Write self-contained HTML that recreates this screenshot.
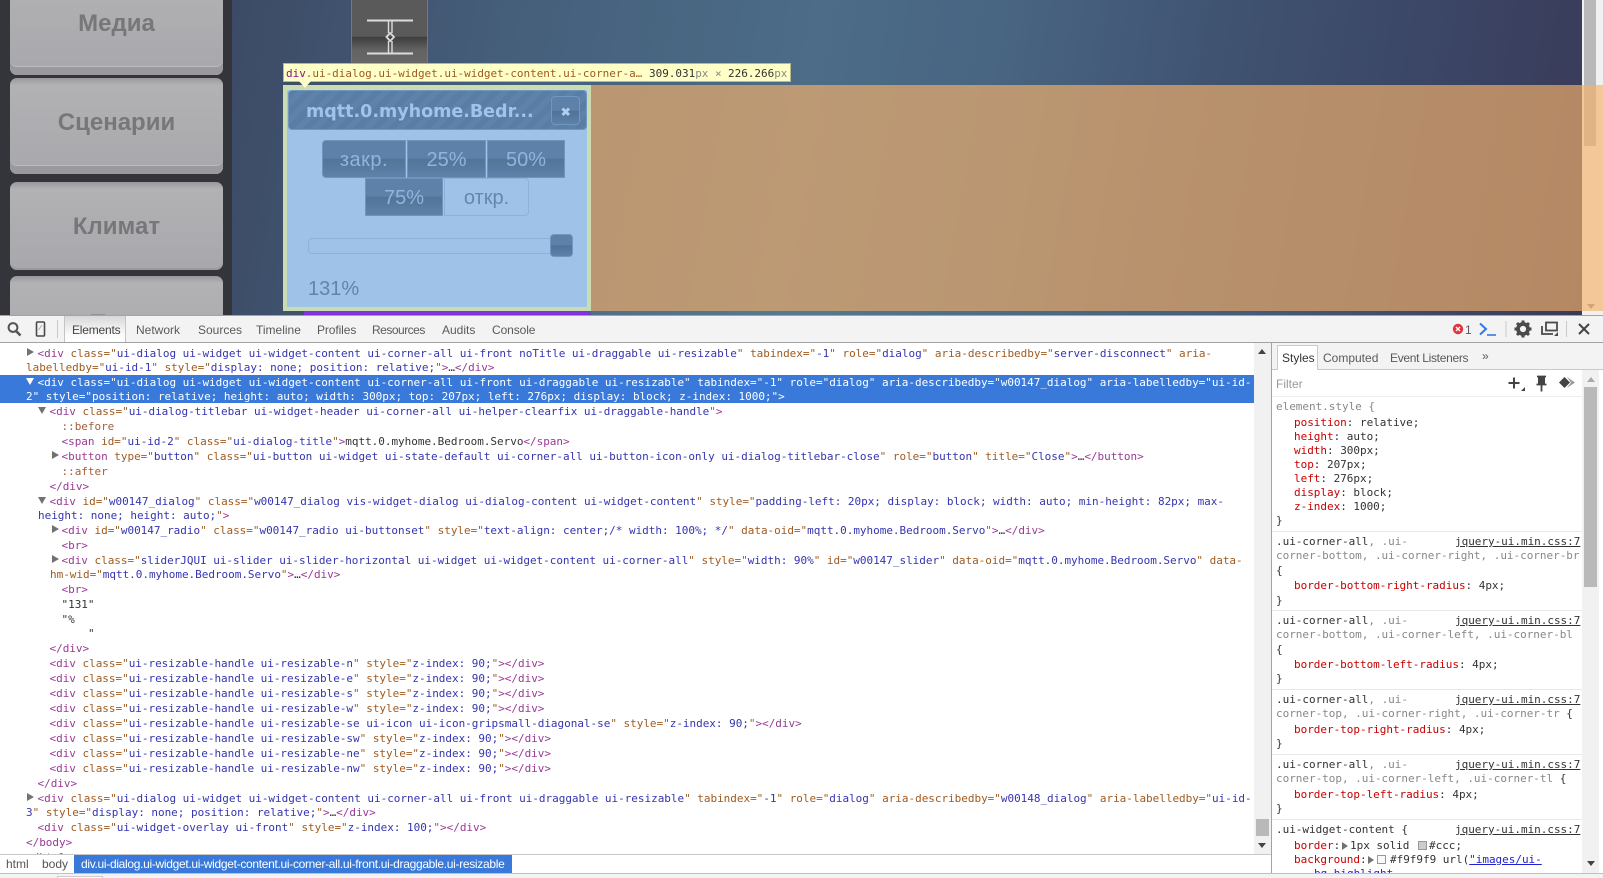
<!DOCTYPE html>
<html><head><meta charset="utf-8"><title>DevTools</title>
<style>
html,body{margin:0;padding:0;width:1603px;height:878px;overflow:hidden;background:#f3f3f3}
body{position:relative;font-family:"Liberation Sans",Arial,sans-serif}
.a{position:absolute}
#page{position:absolute;left:0;top:0;width:1603px;height:315px;overflow:hidden;background:#34353b}
#bg{position:absolute;left:232px;top:0;width:1350px;height:315px;background:linear-gradient(100deg,#3c4a65 0,#46607c 22%,#4c6c87 42%,#486582 55%,#3f5270 72%,#3b4464 88%,#393a58 100%)}
.mb{position:absolute;left:10px;width:213px;border-radius:7px;background:linear-gradient(180deg,#99999c 0,#b2b2b5 7px,#a8a8ac 100%);box-shadow:inset 0 -8px 0 #9a9a9e,inset 0 -9px 0 #bcbcbf;text-align:center;font-weight:bold;font-size:24px;color:#77777a}
.bt{position:absolute;height:38px;box-sizing:border-box;background:linear-gradient(180deg,#5d81a8 0,#5d81a8 48%,#517498 50%,#5e82a9 100%);color:#90b4de;font-size:20px;text-align:center;line-height:39px;border:1px solid #7095bd}
#el{position:absolute;left:0;top:343px;width:1254px;height:511px;overflow:hidden;background:#fff}
.m,.m *{font-family:"DejaVu Sans Mono","Liberation Mono",monospace;font-size:11px;line-height:14px;white-space:pre;font-weight:normal;font-style:normal;text-decoration:none;letter-spacing:-.025px}
.l{position:absolute;color:#333;margin-top:1px}
.t{color:#9a3a94}.n{color:#a05a20}.v{color:#3535b0}.ps{color:#a0603c}
.sel .l,.sel .t,.sel .n,.sel .v{color:#fff}
.r{position:absolute;width:0;height:0;border-left:7px solid #727272;border-top:4px solid transparent;border-bottom:4px solid transparent}
.d{position:absolute;width:0;height:0;border-top:7px solid #727272;border-left:4px solid transparent;border-right:4px solid transparent}
.tb{position:absolute;top:322px;font-size:12px;color:#5a5a5a;line-height:16px}
#st{position:absolute;left:1272px;top:397px;width:310px;height:476px;overflow:hidden;background:#fff}
.s{position:absolute;left:4px;color:#888;margin-top:1px}
.c{color:#333}
.q{position:absolute;left:22px;color:#333;margin-top:1px}
.q b{color:#c80000}
.lk{position:absolute;left:183px;color:#333;text-decoration:underline!important;margin-top:1px}
.dv{position:absolute;left:0;width:310px;height:1px;background:#e8e8e8}
</style></head><body>

<div id="page">
 <div id="bg"></div>
 <div class="mb" style="top:-30px;height:105px;line-height:108px">Медиа</div>
 <div class="mb" style="top:78px;height:96px;line-height:90px">Сценарии</div>
 <div class="mb" style="top:182px;height:88px;line-height:90px;box-shadow:inset 0 -2px 0 #9a9a9e">Климат</div>
 <div class="mb" style="top:276px;height:90px;line-height:96px">Тест</div>
 <div class="a" style="left:280px;top:-11px;color:#fff;font:12px 'Liberation Serif',serif;line-height:14px">Star</div>

 <div class="a" style="left:351px;top:-4px;width:77px;height:70px;box-sizing:border-box;border:1px solid #777;border-radius:4px;background:linear-gradient(180deg,#5a5a5a 0,#5a5a5a 58%,#3e3e3e 59%,#636363 78%,#686868 100%)"></div>
 <svg class="a" style="left:351px;top:0" width="78" height="63" fill="none" stroke="#dcdcdc" stroke-width="2"><path d="M16 20.5H62M16 53.5H62"/><path d="M37.5 21V33M41 21V33M37.5 41V53M41 41V53" stroke-width="1.4"/><path d="M39.2 33L43 37L39.2 41L35.5 37Z" stroke-width="1.8"/></svg>

 <!-- scrollbar -->
 <div class="a" style="left:1582px;top:0;width:21px;height:315px;background:#f1f1f1"></div>
 <div class="a" style="left:1584px;top:0;width:12px;height:146px;background:#b9b9b9"></div>
 <div class="a" style="left:1587px;top:304px;border-top:5px solid #8a8a8a;border-left:4px solid transparent;border-right:4px solid transparent"></div>
 <!-- margin overlay -->
 <div class="a" style="left:591px;top:85px;width:1012px;height:226px;background:rgba(246,178,107,.66);z-index:3"></div>

 <!-- dialog -->
 <div class="a" style="left:283px;top:85px;width:308px;height:226px;background:#c9dcb2"></div>
 <div class="a" style="left:287px;top:90px;width:300px;height:217px;background:#9fc2e8"></div>
 <div class="a" style="left:288px;top:90px;width:299px;height:40px;box-sizing:border-box;border:1px solid #7196c0;border-radius:4px;background:repeating-linear-gradient(135deg,#5a7da5 0,#5a7da5 6px,#5f82aa 6px,#5f82aa 12px)"></div>
 <div class="a" style="left:306px;top:99px;font:bold 17.5px 'DejaVu Sans',sans-serif;line-height:26px;color:#a0c3e9;white-space:nowrap">mqtt.0.myhome.Bedr...</div>
 <div class="a" style="left:551px;top:96px;width:29px;height:29px;box-sizing:border-box;border:1px solid #7196c0;border-radius:4px;background:linear-gradient(180deg,#5d81a8 0,#5d81a8 50%,#4f7299 52%,#5d81a8 100%)"></div>
 <svg class="a" style="left:560px;top:106px" width="12" height="12" stroke="#b3cdee" stroke-width="3"><path d="M2.5 2.5L9 9M9 2.5L2.5 9"/></svg>

 <div class="bt" style="left:322px;top:140px;width:84px;border-radius:4px 0 0 4px;letter-spacing:.5px">закр.</div>
 <div class="bt" style="left:407px;top:140px;width:79px">25%</div>
 <div class="bt" style="left:487px;top:140px;width:78px">50%</div>
 <div class="bt" style="left:365px;top:178px;width:78px">75%</div>
 <div class="bt" style="left:444px;top:178px;width:85px;background:#9fc2e8;color:#6388b0;border-color:#8db1da;border-radius:0 4px 4px 0">откр.</div>

 <div class="a" style="left:308px;top:238px;width:255px;height:16px;box-sizing:border-box;border:1px solid #8db1da;border-radius:4px"></div>
 <div class="a" style="left:550px;top:234px;width:23px;height:23px;box-sizing:border-box;border:1px solid #7196c0;border-radius:4px;background:linear-gradient(180deg,#5d81a8 0,#5d81a8 48%,#4f7299 50%,#5d81a8 100%)"></div>
 <div class="a" style="left:308px;top:277px;font-size:20px;line-height:24px;color:#5f85ad">131%</div>

 <div class="a" style="left:304px;top:311px;width:286px;height:4px;background:#7f33e0"></div>
 <div class="a" style="left:591px;top:311px;width:991px;height:4px;background:linear-gradient(90deg,#4f6f8c,#537a95 20%,#44587a 70%,#393a58)"></div>

 <!-- tooltip -->
 <div class="a m" style="left:283px;top:63px;width:508px;height:19px;box-sizing:border-box;border:1px solid #b8b890;background:#ffffc8;z-index:5"></div>
 <div class="a m" style="left:286px;top:67px;color:#a05a20;z-index:6"><span style="color:#881280">div</span>.ui-dialog.ui-widget.ui-widget-content.ui-corner-a…</div>
 <div class="a m" style="left:649px;top:67px;color:#333;z-index:6">309.031<span style="color:#888">px × </span></div>
 <div class="a m" style="left:728px;top:67px;color:#333;z-index:6">226.266<span style="color:#888">px</span></div>
 <div class="a" style="left:299px;top:81px;border-top:7px solid #ffffc8;border-left:6px solid transparent;border-right:6px solid transparent;z-index:6"></div>
</div>

<!-- toolbar -->
<div class="a" style="left:0;top:315px;width:1603px;height:28px;box-sizing:border-box;background:#f3f3f3;border-top:1px solid #a3a3a3;border-bottom:1px solid #a3a3a3"></div>
<svg class="a" style="left:6px;top:321px" width="16" height="16" fill="none" stroke="#555" stroke-width="2"><circle cx="7" cy="6.5" r="4.4"/><path d="M10 10L14.5 14.5" stroke-width="2.6"/></svg>
<svg class="a" style="left:35px;top:321px" width="12" height="17" fill="none"><rect x="1.5" y="1" width="8" height="14" rx="1" stroke="#4a4a4a" stroke-width="1.6"/><path d="M3.5 9L7 4" stroke="#aaa"/></svg>
<div class="a" style="left:57px;top:320px;width:1px;height:18px;background:#c8c8c8"></div>
<div class="a" style="left:64px;top:316px;width:62px;height:26px;box-sizing:border-box;border-left:1px solid #c4c4c4;border-right:1px solid #c4c4c4;background:linear-gradient(180deg,#d8d8d8,#fafafa 70%,#fff)"></div>
<div class="tb" style="left:72px;color:#444;letter-spacing:-.2px">Elements</div>
<div class="tb" style="left:136px">Network</div>
<div class="tb" style="left:198px">Sources</div>
<div class="tb" style="left:256px">Timeline</div>
<div class="tb" style="left:317px;letter-spacing:-.1px">Profiles</div>
<div class="tb" style="left:372px;letter-spacing:-.5px">Resources</div>
<div class="tb" style="left:442px">Audits</div>
<div class="tb" style="left:492px;letter-spacing:-.1px">Console</div>

<svg class="a" style="left:1451px;top:320px" width="120" height="18" fill="none">
 <circle cx="7" cy="9" r="5.2" fill="#e0343f"/><path d="M5 7L9 11M9 7L5 11" stroke="#fff" stroke-width="1.4"/>
 <path d="M29 3.5L35 9L29 14.5" stroke="#2f7be6" stroke-width="2"/><path d="M36 15H45" stroke="#2f7be6" stroke-width="1.6"/>
 <path d="M55 1V17" stroke="#c8c8c8"/>
 <circle cx="72" cy="9" r="5" stroke="#4a4a4a" stroke-width="3.8"/><path d="M72 0.5V4M72 14V17.5M63.5 9H67M77 9H80.5M66 3L68.5 5.5M75.5 12.5L78 15M66 15L68.5 12.5M75.5 5.5L78 3" stroke="#4a4a4a" stroke-width="3"/>
 <rect x="95" y="2.5" width="11" height="8" stroke="#4a4a4a" stroke-width="1.8"/><path d="M91 6V14H102" stroke="#4a4a4a" stroke-width="1.8"/><path d="M103 16H107V12Z" fill="#4a4a4a"/>
 <path d="M115.5 1V17" stroke="#c8c8c8"/>
</svg>
<div class="a" style="left:1465px;top:322px;font-size:12px;line-height:16px;color:#5a5a5a">1</div>
<svg class="a" style="left:1577px;top:322px" width="14" height="14" stroke="#444" stroke-width="2"><path d="M2 2L12 12M12 2L2 12"/></svg>

<!-- elements pane -->
<div id="el" class="m">
<div class="l" style="left:26px;top:-19px"><span class="n">labelledby</span><span class="n">="</span><span class="v">ui-id-0</span>" <span class="n">style</span><span class="n">="</span><span class="v">display: none; position: relative; top: 0px; left: 0px;</span>"<span class="t">&gt;…&lt;/div&gt;</span></div>
<div class="a" style="left:0;top:32px;width:1254px;height:28px;background:#3879d9"></div>
<div class="sel">
<div class="l" style="left:37.5px;top:32px">&lt;div class="ui-dialog ui-widget ui-widget-content ui-corner-all ui-front ui-draggable ui-resizable" tabindex="-1" role="dialog" aria-describedby="w00147_dialog" aria-labelledby="ui-id-</div>
<div class="l" style="left:26px;top:46px">2" style="position: relative; height: auto; width: 300px; top: 207px; left: 276px; display: block; z-index: 1000;"&gt;</div>
</div>
<div class="l" style="left:37.5px;top:3px"><span class="t">&lt;div</span> <span class="n">class="</span><span class="v">ui-dialog ui-widget ui-widget-content ui-corner-all ui-front noTitle ui-draggable ui-resizable</span><span class="n">"</span> <span class="n">tabindex="</span><span class="v">-1</span><span class="n">"</span> <span class="n">role="</span><span class="v">dialog</span><span class="n">"</span> <span class="n">aria-describedby="</span><span class="v">server-disconnect</span><span class="n">"</span> <span class="n">aria-</span></div>
<div class="l" style="left:26px;top:17px"><span class="n">labelledby="</span><span class="v">ui-id-1</span><span class="n">"</span> <span class="n">style="</span><span class="v">display: none; position: relative;</span><span class="n">"</span><span class="t">&gt;</span>…<span class="t">&lt;/div&gt;</span></div>
<div class="l" style="left:49.5px;top:61px"><span class="t">&lt;div</span> <span class="n">class="</span><span class="v">ui-dialog-titlebar ui-widget-header ui-corner-all ui-helper-clearfix ui-draggable-handle</span><span class="n">"</span><span class="t">&gt;</span></div>
<div class="l ps" style="left:61.5px;top:76px">::before</div>
<div class="l" style="left:61.5px;top:91px"><span class="t">&lt;span</span> <span class="n">id="</span><span class="v">ui-id-2</span><span class="n">"</span> <span class="n">class="</span><span class="v">ui-dialog-title</span><span class="n">"</span><span class="t">&gt;</span>mqtt.0.myhome.Bedroom.Servo<span class="t">&lt;/span&gt;</span></div>
<div class="l" style="left:61.5px;top:106px"><span class="t">&lt;button</span> <span class="n">type="</span><span class="v">button</span><span class="n">"</span> <span class="n">class="</span><span class="v">ui-button ui-widget ui-state-default ui-corner-all ui-button-icon-only ui-dialog-titlebar-close</span><span class="n">"</span> <span class="n">role="</span><span class="v">button</span><span class="n">"</span> <span class="n">title="</span><span class="v">Close</span><span class="n">"</span><span class="t">&gt;</span>…<span class="t">&lt;/button&gt;</span></div>
<div class="l ps" style="left:61.5px;top:121px">::after</div>
<div class="l t" style="left:49.5px;top:136px">&lt;/div&gt;</div>
<div class="l" style="left:49.5px;top:151px"><span class="t">&lt;div</span> <span class="n">id="</span><span class="v">w00147_dialog</span><span class="n">"</span> <span class="n">class="</span><span class="v">w00147_dialog vis-widget-dialog ui-dialog-content ui-widget-content</span><span class="n">"</span> <span class="n">style="</span><span class="v">padding-left: 20px; display: block; width: auto; min-height: 82px; max-</span></div>
<div class="l" style="left:38px;top:165px"><span class="v">height: none; height: auto;</span><span class="n">"</span><span class="t">&gt;</span></div>
<div class="l" style="left:61.5px;top:180px"><span class="t">&lt;div</span> <span class="n">id="</span><span class="v">w00147_radio</span><span class="n">"</span> <span class="n">class="</span><span class="v">w00147_radio ui-buttonset</span><span class="n">"</span> <span class="n">style="</span><span class="v">text-align: center;/* width: 100%; */</span><span class="n">"</span> <span class="n">data-oid="</span><span class="v">mqtt.0.myhome.Bedroom.Servo</span><span class="n">"</span><span class="t">&gt;</span>…<span class="t">&lt;/div&gt;</span></div>
<div class="l t" style="left:61.5px;top:195px">&lt;br&gt;</div>
<div class="l" style="left:61.5px;top:210px"><span class="t">&lt;div</span> <span class="n">class="</span><span class="v">sliderJQUI ui-slider ui-slider-horizontal ui-widget ui-widget-content ui-corner-all</span><span class="n">"</span> <span class="n">style="</span><span class="v">width: 90%</span><span class="n">"</span> <span class="n">id="</span><span class="v">w00147_slider</span><span class="n">"</span> <span class="n">data-oid="</span><span class="v">mqtt.0.myhome.Bedroom.Servo</span><span class="n">"</span> <span class="n">data-</span></div>
<div class="l" style="left:50px;top:224px"><span class="n">hm-wid="</span><span class="v">mqtt.0.myhome.Bedroom.Servo</span><span class="n">"</span><span class="t">&gt;</span>…<span class="t">&lt;/div&gt;</span></div>
<div class="l t" style="left:61.5px;top:239px">&lt;br&gt;</div>
<div class="l" style="left:61.5px;top:254px">"131"</div>
<div class="l" style="left:61.5px;top:269px">"%</div>
<div class="l" style="left:88px;top:283px">"</div>
<div class="l t" style="left:49.5px;top:298px">&lt;/div&gt;</div>
<div class="l" style="left:49.5px;top:313px"><span class="t">&lt;div</span> <span class="n">class="</span><span class="v">ui-resizable-handle ui-resizable-n</span><span class="n">"</span> <span class="n">style="</span><span class="v">z-index: 90;</span><span class="n">"</span><span class="t">&gt;&lt;/div&gt;</span></div>
<div class="l" style="left:49.5px;top:328px"><span class="t">&lt;div</span> <span class="n">class="</span><span class="v">ui-resizable-handle ui-resizable-e</span><span class="n">"</span> <span class="n">style="</span><span class="v">z-index: 90;</span><span class="n">"</span><span class="t">&gt;&lt;/div&gt;</span></div>
<div class="l" style="left:49.5px;top:343px"><span class="t">&lt;div</span> <span class="n">class="</span><span class="v">ui-resizable-handle ui-resizable-s</span><span class="n">"</span> <span class="n">style="</span><span class="v">z-index: 90;</span><span class="n">"</span><span class="t">&gt;&lt;/div&gt;</span></div>
<div class="l" style="left:49.5px;top:358px"><span class="t">&lt;div</span> <span class="n">class="</span><span class="v">ui-resizable-handle ui-resizable-w</span><span class="n">"</span> <span class="n">style="</span><span class="v">z-index: 90;</span><span class="n">"</span><span class="t">&gt;&lt;/div&gt;</span></div>
<div class="l" style="left:49.5px;top:373px"><span class="t">&lt;div</span> <span class="n">class="</span><span class="v">ui-resizable-handle ui-resizable-se ui-icon ui-icon-gripsmall-diagonal-se</span><span class="n">"</span> <span class="n">style="</span><span class="v">z-index: 90;</span><span class="n">"</span><span class="t">&gt;&lt;/div&gt;</span></div>
<div class="l" style="left:49.5px;top:388px"><span class="t">&lt;div</span> <span class="n">class="</span><span class="v">ui-resizable-handle ui-resizable-sw</span><span class="n">"</span> <span class="n">style="</span><span class="v">z-index: 90;</span><span class="n">"</span><span class="t">&gt;&lt;/div&gt;</span></div>
<div class="l" style="left:49.5px;top:403px"><span class="t">&lt;div</span> <span class="n">class="</span><span class="v">ui-resizable-handle ui-resizable-ne</span><span class="n">"</span> <span class="n">style="</span><span class="v">z-index: 90;</span><span class="n">"</span><span class="t">&gt;&lt;/div&gt;</span></div>
<div class="l" style="left:49.5px;top:418px"><span class="t">&lt;div</span> <span class="n">class="</span><span class="v">ui-resizable-handle ui-resizable-nw</span><span class="n">"</span> <span class="n">style="</span><span class="v">z-index: 90;</span><span class="n">"</span><span class="t">&gt;&lt;/div&gt;</span></div>
<div class="l t" style="left:37.5px;top:433px">&lt;/div&gt;</div>
<div class="l" style="left:37.5px;top:448px"><span class="t">&lt;div</span> <span class="n">class="</span><span class="v">ui-dialog ui-widget ui-widget-content ui-corner-all ui-front ui-draggable ui-resizable</span><span class="n">"</span> <span class="n">tabindex="</span><span class="v">-1</span><span class="n">"</span> <span class="n">role="</span><span class="v">dialog</span><span class="n">"</span> <span class="n">aria-describedby="</span><span class="v">w00148_dialog</span><span class="n">"</span> <span class="n">aria-labelledby="</span><span class="v">ui-id-</span></div>
<div class="l" style="left:26px;top:462px"><span class="v">3</span><span class="n">"</span> <span class="n">style="</span><span class="v">display: none; position: relative;</span><span class="n">"</span><span class="t">&gt;</span>…<span class="t">&lt;/div&gt;</span></div>
<div class="l" style="left:37.5px;top:477px"><span class="t">&lt;div</span> <span class="n">class="</span><span class="v">ui-widget-overlay ui-front</span><span class="n">"</span> <span class="n">style="</span><span class="v">z-index: 100;</span><span class="n">"</span><span class="t">&gt;&lt;/div&gt;</span></div>
<div class="l t" style="left:26px;top:492px">&lt;/body&gt;</div>
<div class="l t" style="left:26px;top:507px">&lt;/html&gt;</div>

<div class="r" style="left:27px;top:5px"></div>
<div class="d" style="left:26px;top:35px;border-top-color:#fff"></div>
<div class="d" style="left:38px;top:64px"></div>
<div class="r" style="left:52px;top:108px"></div>
<div class="d" style="left:38px;top:154px"></div>
<div class="r" style="left:52px;top:182px"></div>
<div class="r" style="left:52px;top:212px"></div>
<div class="r" style="left:27px;top:450px"></div>
</div>

<!-- pane scrollbar -->
<div class="a" style="left:1254px;top:343px;width:18px;height:511px;background:#f1f1f1"></div>
<div class="a" style="left:1258px;top:349px;border-bottom:5px solid #444;border-left:4px solid transparent;border-right:4px solid transparent"></div>
<div class="a" style="left:1258px;top:843px;border-top:5px solid #444;border-left:4px solid transparent;border-right:4px solid transparent"></div>
<div class="a" style="left:1256px;top:819px;width:13px;height:17px;background:#b9b9b9"></div>

<!-- breadcrumb -->
<div class="a" style="left:0;top:854px;width:1272px;height:1px;background:#c8c8c8"></div>
<div class="a" style="left:0;top:855px;width:1272px;height:18px;background:#fff"></div>
<div class="a" style="left:6px;top:857px;font-size:12px;line-height:14px;color:#555">html</div>
<div class="a" style="left:42px;top:857px;font-size:12px;line-height:14px;color:#555">body</div>
<div class="a" style="left:74px;top:855px;width:438px;height:18px;background:#3879d9"></div>
<div class="a" style="left:81px;top:857px;font-size:12px;line-height:14px;color:#fff;white-space:nowrap;letter-spacing:-.31px">div.ui-dialog.ui-widget.ui-widget-content.ui-corner-all.ui-front.ui-draggable.ui-resizable</div>
<div class="a" style="left:0;top:873px;width:1603px;height:5px;background:#f3f3f3;border-top:1px solid #c0c0c0;box-sizing:border-box"></div>
<div class="a" style="left:57px;top:876px;width:46px;height:2px;background:#fff;border:1px solid #ccc;border-bottom:0;box-sizing:border-box"></div>

<!-- sidebar -->
<div class="a" style="left:1271px;top:343px;width:1px;height:530px;background:#a3a3a3"></div>
<div class="a" style="left:1272px;top:343px;width:331px;height:26px;background:#f3f3f3;border-bottom:1px solid #c8c8c8"></div>
<div class="a" style="left:1277px;top:345px;width:41px;height:25px;box-sizing:border-box;background:#fff;border:1px solid #ccc;border-bottom:0"></div>
<div class="tb" style="left:1282px;top:350px;color:#333">Styles</div>
<div class="tb" style="left:1323px;top:350px">Computed</div>
<div class="tb" style="left:1390px;top:350px;letter-spacing:-.3px">Event Listeners</div>
<div class="tb" style="left:1482px;top:348px">»</div>
<div class="a" style="left:1272px;top:370px;width:310px;height:27px;background:#fff;border-bottom:1px solid #ededed;box-sizing:border-box"></div>
<div class="a" style="left:1276px;top:377px;font-size:12px;line-height:14px;color:#999">Filter</div>
<svg class="a" style="left:1504px;top:374px" width="75" height="18" fill="none">
 <path d="M10 3.5V14.5M4.5 9H15.5" stroke="#444" stroke-width="2"/><path d="M17 17H21V13Z" fill="#444"/>
 <path d="M34 3H41V10H34Z" fill="#444"/><path d="M33 2.5H42M32.5 10.5H42.5M37.5 11V17.5" stroke="#444" stroke-width="1.8"/>
 <path d="M55 8.5L60.5 3L66 8.5L60.5 14Z" fill="#444"/><path d="M63 3L71 8.5L63 14L67 8.5Z" fill="#999"/>
</svg>

<div id="st" class="m">
<div class="s" style="top:2px">element.style {</div>
<div class="q" style="top:18px"><b>position</b>: relative;</div>
<div class="q" style="top:32px"><b>height</b>: auto;</div>
<div class="q" style="top:46px"><b>width</b>: 300px;</div>
<div class="q" style="top:60px"><b>top</b>: 207px;</div>
<div class="q" style="top:74px"><b>left</b>: 276px;</div>
<div class="q" style="top:88px"><b>display</b>: block;</div>
<div class="q" style="top:102px"><b>z-index</b>: 1000;</div>
<div class="s c" style="top:116px">}</div>
<div class="dv" style="top:134px"></div>
<div class="s" style="top:137px"><span class="c">.ui-corner-all</span>, .ui-</div><div class="lk" style="top:137px">jquery-ui.min.css:7</div>
<div class="s" style="top:151px">corner-bottom, .ui-corner-right, .ui-corner-br</div>
<div class="s c" style="top:166px">{</div>
<div class="q" style="top:181px"><b>border-bottom-right-radius</b>: 4px;</div>
<div class="s c" style="top:196px">}</div>
<div class="dv" style="top:213px"></div>
<div class="s" style="top:216px"><span class="c">.ui-corner-all</span>, .ui-</div><div class="lk" style="top:216px">jquery-ui.min.css:7</div>
<div class="s" style="top:230px">corner-bottom, .ui-corner-left, .ui-corner-bl</div>
<div class="s c" style="top:245px">{</div>
<div class="q" style="top:260px"><b>border-bottom-left-radius</b>: 4px;</div>
<div class="s c" style="top:274px">}</div>
<div class="dv" style="top:292px"></div>
<div class="s" style="top:295px"><span class="c">.ui-corner-all</span>, .ui-</div><div class="lk" style="top:295px">jquery-ui.min.css:7</div>
<div class="s" style="top:309px">corner-top, .ui-corner-right, .ui-corner-tr <span class="c">{</span></div>
<div class="q" style="top:325px"><b>border-top-right-radius</b>: 4px;</div>
<div class="s c" style="top:339px">}</div>
<div class="dv" style="top:357px"></div>
<div class="s" style="top:360px"><span class="c">.ui-corner-all</span>, .ui-</div><div class="lk" style="top:360px">jquery-ui.min.css:7</div>
<div class="s" style="top:374px">corner-top, .ui-corner-left, .ui-corner-tl <span class="c">{</span></div>
<div class="q" style="top:390px"><b>border-top-left-radius</b>: 4px;</div>
<div class="s c" style="top:404px">}</div>
<div class="dv" style="top:422px"></div>
<div class="s c" style="top:425px">.ui-widget-content {</div><div class="lk" style="top:425px">jquery-ui.min.css:7</div>
<div class="q" style="top:441px"><b>border</b>:</div>
<div class="r" style="left:70px;top:445px;border-left-width:6px"></div>
<div class="q" style="left:78px;top:441px">1px solid</div>
<div class="a" style="left:146px;top:444px;width:9px;height:9px;background:#ccc;border:1px solid #999;box-sizing:border-box"></div>
<div class="q" style="left:157px;top:441px">#ccc;</div>
<div class="q" style="top:455px"><b>background</b>:</div>
<div class="r" style="left:96px;top:459px;border-left-width:6px"></div>
<div class="a" style="left:105px;top:458px;width:9px;height:9px;background:#f9f9f9;border:1px solid #999;box-sizing:border-box"></div>
<div class="q" style="left:118px;top:455px">#f9f9f9 url(<span style="color:#2222cc;text-decoration:underline">"images/ui-</span></div>
<div class="q" style="left:42px;top:469px"><span style="color:#2222cc;text-decoration:underline">bg_highlight</span></div>
</div>

<!-- sidebar scrollbar -->
<div class="a" style="left:1582px;top:370px;width:17px;height:503px;background:#f1f1f1"></div>
<div class="a" style="left:1599px;top:370px;width:4px;height:503px;background:#fff"></div>
<div class="a" style="left:1587px;top:377px;border-bottom:5px solid #aaa;border-left:4px solid transparent;border-right:4px solid transparent"></div>
<div class="a" style="left:1587px;top:861px;border-top:5px solid #444;border-left:4px solid transparent;border-right:4px solid transparent"></div>
<div class="a" style="left:1584px;top:387px;width:13px;height:200px;background:#b9b9b9"></div>
</body></html>
